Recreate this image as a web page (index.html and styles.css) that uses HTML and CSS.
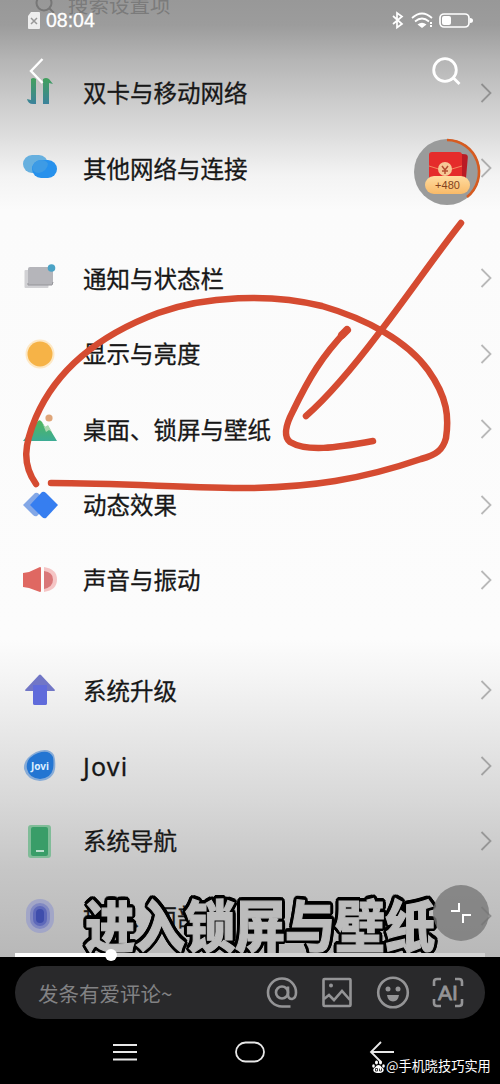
FILE: index.html
```
<!DOCTYPE html>
<html lang="zh-CN">
<head>
<meta charset="utf-8">
<title>设置</title>
<link rel="stylesheet" href="styles.css">
</head>
<body>
<div class="phone">
  <main class="video">
    <div class="search-row">
      <svg class="search-small" width="22" height="22" viewBox="0 0 22 22"><circle cx="10" cy="9" r="7.5"/><path d="M15 14l5 5"/></svg>
      <span>搜索设置项</span>
    </div>
    <section class="group">
      <div class="row">
        <svg class="icon" viewBox="0 0 34 34"><defs><linearGradient id="sim" x2="0" y2="1"><stop stop-color="#42a05d"/><stop offset="1" stop-color="#3b829b"/></linearGradient></defs><path fill="url(#sim)" d="M8 3q2-2 5 0v25H10Q5 28 4 23l4 1zM20 3q3-2 6 0l4 5-4-1v21h-6z"/></svg>
        <span class="label">双卡与移动网络</span><svg class="chevron" viewBox="0 0 12 20"><path d="M1.500 1l9 9-9 9"/></svg>
      </div>
      <div class="row">
        <svg class="icon" viewBox="0 0 34 34"><rect x="0" y="4" width="25" height="18" rx="9" fill="#67b0df"/><rect x="9" y="9" width="25" height="18" rx="9" fill="#2791ec"/><path d="M9.500 18q0-8 8-9 6 0 7.500 4-1 7-9 9-5 0-6.500-4z" fill="#3d9be5"/></svg>
        <span class="label">其他网络与连接</span><svg class="chevron" viewBox="0 0 12 20"><path d="M1.500 1l9 9-9 9"/></svg>
      </div>
    </section>
    <section class="group">
      <div class="row">
        <svg class="icon" viewBox="0 0 34 34"><rect x="1.500" y="9" width="24" height="18" rx="1" fill="#d1d1d4"/><rect x="5" y="6" width="25" height="18" rx="2" fill="#b5b5ba"/><path d="M5 22v2h24l1-3" stroke="#949499" fill="none"/><circle cx="28.500" cy="7" r="3.800" fill="#4ba3c6"/></svg>
        <span class="label">通知与状态栏</span><svg class="chevron" viewBox="0 0 12 20"><path d="M1.500 1l9 9-9 9"/></svg>
      </div>
      <div class="row">
        <svg class="icon" viewBox="0 0 34 34"><circle cx="17" cy="17" r="14.500" fill="#fde8c5"/><circle cx="17" cy="17" r="12.500" fill="#f6b347"/></svg>
        <span class="label">显示与亮度</span><svg class="chevron" viewBox="0 0 12 20"><path d="M1.500 1l9 9-9 9"/></svg>
      </div>
      <div class="row">
        <svg class="icon" viewBox="0 0 34 34"><defs><linearGradient id="hill" x2="0" y2="1"><stop stop-color="#50b75d"/><stop offset="1" stop-color="#3cab95"/></linearGradient></defs><path d="M0 29L15 9q2-2 4 1l3 5 3-1 9 15z" fill="url(#hill)"/><path d="M19 10l3 5 3-2 4 7-3-2-3 2z" fill="#a9d8ad"/><circle cx="26" cy="6" r="3.600" fill="#dfa579"/></svg>
        <span class="label">桌面、锁屏与壁纸</span><svg class="chevron" viewBox="0 0 12 20"><path d="M1.500 1l9 9-9 9"/></svg>
      </div>
      <div class="row">
        <svg class="icon" viewBox="0 0 34 34"><path d="M12 5q2-1 4 1l9 11-11 11q-2 1-4-1L0 17z" fill="#83a7e6"/><path d="M19 4q2-1 4 1l12 12-12 13q-2 1-4-1L7 17z" fill="#367ef0"/></svg>
        <span class="label">动态效果</span><svg class="chevron" viewBox="0 0 12 20"><path d="M1.500 1l9 9-9 9"/></svg>
      </div>
      <div class="row">
        <svg class="icon" viewBox="0 0 34 34"><path d="M0 10l6-1 11-5q1 0 1 1v23q0 1-1 1L6 25l-6-1z" fill="#df6862"/><path d="M21 4q13 2 13 12.500T21 29z" fill="#f5c5c5"/><path d="M21 8q9 1 9 8.500T21 26z" fill="#d97779"/></svg>
        <span class="label">声音与振动</span><svg class="chevron" viewBox="0 0 12 20"><path d="M1.500 1l9 9-9 9"/></svg>
      </div>
    </section>
    <section class="group">
      <div class="row">
        <svg class="icon" viewBox="0 0 34 34"><path d="M16 2q1-1 2 0l14 15q0 1-1 1h-7v12q0 2-2 2H12q-2 0-2-2V18H3q-1 0-1-1z" fill="#7176c6"/><path d="M10 12h14v18q0 2-2 2H12q-2 0-2-2z" fill="#606bdb"/></svg>
        <span class="label">系统升级</span><svg class="chevron" viewBox="0 0 12 20"><path d="M1.500 1l9 9-9 9"/></svg>
      </div>
      <div class="row">
        <svg class="icon" viewBox="0 0 34 34"><path d="M13 3Q26-2 31 6q2 6 1 14-2 11-15 12Q4 31 1 20 0 10 13 3z" fill="#86abd7"/><path d="M15 4q11-4 15 4 1 6 0 12-2 9-13 10Q6 29 4 20 2 9 15 4z" fill="#2375d2"/><text x="17" y="21" class="jovi-mark">Jovi</text></svg>
        <span class="label latin">Jovi</span><svg class="chevron" viewBox="0 0 12 20"><path d="M1.500 1l9 9-9 9"/></svg>
      </div>
      <div class="row">
        <svg class="icon" viewBox="0 0 34 34"><rect x="5" y="1" width="23" height="33" rx="3" fill="#80bc98"/><rect x="8" y="3" width="17" height="29" rx="2" fill="#399d68"/><path d="M13 27h8" stroke="#bbdfcd" stroke-width="2"/></svg>
        <span class="label">系统导航</span><svg class="chevron" viewBox="0 0 12 20"><path d="M1.500 1l9 9-9 9"/></svg>
      </div>
      <div class="row">
        <svg class="icon" viewBox="0 0 34 34"><rect x="3" y="0" width="28" height="34" rx="14" fill="#a2a6c7"/><rect x="7" y="4" width="20" height="26" rx="10" fill="#8088c2"/><rect x="10" y="7" width="14" height="20" rx="7" fill="#5e69ba"/><rect x="13" y="10" width="8" height="14" rx="4" fill="#3e4dac"/></svg>
        <span class="label">指纹、面部</span><svg class="chevron" viewBox="0 0 12 20"><path d="M1.500 1l9 9-9 9"/></svg>
      </div>
    </section>

    <svg class="drawing" width="500" height="957" viewBox="0 0 500 957">
      <path d="M36 484C22 464 24 445 36 417C60 362 110 331 158 313C205 296 270 293 322 306C367 319 407 341 428 370C448 398 449 418 446 438C443 450 436 455 421 459C360 480 310 487 250 488C190 488 120 483 51 483"/>
      <path d="M461 223C432 260 405 300 379 333C354 366 330 395 306 416"/>
      <path d="M347 330C322 356 309 378 293 411C284 428 284 437 290 442C307 452 335 448 373 441"/>
      <path class="blob" d="M347 330l-5 5"/>
    </svg>

    <header class="status">
      <svg class="sim-status" width="14" height="18" viewBox="0 0 14 18"><path d="M4 1h8q1 0 1 1v15q0 1-1 1H2q-1 0-1-1V5z" fill="#eee"/><path d="M4 7l6 6m0-6l-6 6" stroke="#999" stroke-width="1.500"/></svg>
      <span class="time">08:04</span>
      <svg class="signals" width="86" height="20" viewBox="0 0 86 20"><g fill="none" stroke="#fff" stroke-width="1.700"><path d="M3 6l9 8-5 3.500V3l5 3.500-9 7.500"/><path d="M22 8q10-9 20 0M25 11.500q7-6 14 0"/><rect x="50" y="4" width="29" height="13" rx="4"/></g><path d="M27.500 14.500q4.500-3.500 9 0L32 18z" fill="#fff"/><path d="M40 12h2v2h-2zm0 3h2v2h-2z" fill="#fff"/><rect x="52" y="6" width="9" height="9" rx="2" fill="#fff"/><path d="M80 8q3 0 3 2.500T80 13z" fill="#fff"/></svg>
    </header>
    <svg class="back" width="16" height="28" viewBox="0 0 16 28"><path d="M14.500 2L3 14l11.500 12"/></svg>
    <svg class="search" width="32" height="32" viewBox="0 0 32 32"><circle cx="14" cy="14" r="11.300"/><path d="M22 21.500l6.500 6.500"/></svg>

    <div class="reward">
      <svg width="68" height="68" viewBox="0 0 68 68"><circle cx="34" cy="34" r="33" fill="#9a9b9b"/><path d="M34 2a32 32 0 0 1 20 57" fill="none" stroke="#d75b20" stroke-width="2.600"/><rect x="22" y="15" width="32" height="26" rx="3" fill="#b91b25" transform="rotate(5 38 28)"/><rect x="16" y="14" width="33" height="27" rx="3" fill="#e52c2b"/><path d="M16 28l16 5 17-5" fill="none" stroke="#f38a62"/><circle cx="32" cy="31" r="7" fill="#f6c896"/><path d="M29 28l3 4 3-4m-3 4v4m-3-3h6" fill="none" stroke="#b54e32" stroke-width="1.500"/></svg>
      <span class="points">+480</span>
    </div>
    <div class="caption">进入锁屏与壁纸</div>
    <div class="shrink"><svg width="22" height="22" viewBox="0 0 22 22"><path d="M1 9h8V1M21 13h-8v8"/></svg></div>
    <div class="progress"><span class="played"></span><span class="knob"></span></div>
  </main>

  <footer class="bottom">
    <div class="comment">
      <span class="placeholder">发条有爱评论~</span>
      <div class="tools">
        <svg viewBox="0 0 32 32"><circle cx="16" cy="15.500" r="6"/><path d="M22 9.500v8q0 4.500 4 4.500 4-1 4-6.500A14 14 0 1 0 16 29.500h8.500"/></svg>
        <svg viewBox="0 0 32 32"><rect x="2.500" y="2" width="27" height="27" rx="1"/><path d="M3 22l5-4 5 5 8-9 8 9"/><circle class="solid" cx="10" cy="8.500" r="2"/></svg>
        <svg viewBox="0 0 32 32"><circle cx="16" cy="15.500" r="14.800"/><circle class="solid" cx="11" cy="12" r="2.500"/><circle class="solid" cx="21" cy="12" r="2.500"/><path class="solid" d="M10 18h12q-1 6.500-6 6.500T10 18z"/></svg>
        <svg viewBox="0 0 32 32"><path d="M9 2H5Q2 2 2 5v4M23 2h4q3 0 3 3v4M9 29H5q-3 0-3-3v-4M23 29h4q3 0 3-3v-4"/><text x="16" y="23" class="ai">AI</text></svg>
      </div>
    </div>
    <nav class="navigation">
      <svg width="26" height="20" viewBox="0 0 26 20"><path d="M1 3h24M1 10h24M1 17.500h24"/></svg>
      <svg class="home" width="30" height="22" viewBox="0 0 30 22"><rect x="1" y="1.500" width="28" height="19" rx="9.500"/></svg>
      <svg width="26" height="22" viewBox="0 0 26 22"><path d="M12 1L2 11l10 10M2 11h23"/></svg>
    </nav>
    <div class="watermark"><svg width="13" height="13" viewBox="0 0 13 13"><ellipse cx="4.500" cy="2.500" rx="1.500" ry="2"/><ellipse cx="8.500" cy="2.500" rx="1.500" ry="2"/><ellipse cx="1.500" cy="6" rx="1.300" ry="1.800"/><ellipse cx="11.500" cy="6" rx="1.300" ry="1.800"/><path d="M6.500 5q2 0 3 2 3 2 2 4-1 2-5 2t-5-2q-1-2 2-4 1-2 3-2z"/><path d="M5.500 8.500h-2v2.500h2zM7.500 8.500V11h2V8.500" fill="none" stroke="#111" stroke-width=".8"/></svg><span>@手机晓技巧实用</span></div>
  </footer>
</div>
</body>
</html>
```
FILE: styles.css
```
* { box-sizing: border-box; }
body {
  margin: 0;
  background: #000;
  font-family: "Noto Sans", "Noto Sans CJK SC", sans-serif;
}
svg { display: block; flex: none; overflow: visible; }
.phone { width: 500px; height: 1084px; overflow: hidden; }
.video {
  position: relative;
  z-index: 1;
  height: 957px;
  background: linear-gradient(#989898 0, #9c9c9c 25px, #b5b5b5 60px, #cbcbcb 100px, #dedede 137px, #f3f3f3 175px, #fbfbfb 210px, #fcfcfc 640px, #f5f5f5 675px, #e8e8e8 730px, #d8d8d8 800px, #c6c6c6 870px, #b8b8b8 957px);
}
.search-row {
  height: 55px;
  padding: 0 0 0 34px;
  display: flex;
  align-items: flex-start;
  color: #7b7b7b;
  font-size: 20.500px;
  line-height: 24px;
}
.search-row span { margin: -7px 0 0 12px; }
.search-small { margin-top: -6px; fill: none; stroke: #777; stroke-width: 2; }
.group { margin-bottom: 34.900px; }
.row { height: 75.400px; padding: 0 8px 0 23px; display: flex; align-items: center; }
.icon { width: 34px; height: 34px; }
.label { margin-left: 26px; padding-bottom: 1px; flex: 1; font-family: "Noto Sans CJK SC", sans-serif; font-size: 23.500px; line-height: 34px; color: #171717; -webkit-text-stroke: .3px #171717; white-space: nowrap; }
.label.latin { padding: 1px 0 0; font-family: "Noto Sans", sans-serif; font-size: 25px; letter-spacing: 1.200px; }
.chevron { width: 12px; height: 20px; fill: none; stroke: #000; stroke-opacity: .27; stroke-width: 1.800; }
.jovi-mark { font: bold 10px "Noto Sans", sans-serif; fill: #dceeff; text-anchor: middle; }

.drawing { position: absolute; left: 0; top: 0; fill: none; stroke: #d54b31; stroke-width: 6.500; stroke-linecap: round; stroke-linejoin: round; }
.drawing .blob { stroke-width: 8; }

.status { position: absolute; left: 27px; right: 24px; top: 9px; height: 22px; display: flex; align-items: center; color: #fff; }
.time { margin-left: 5px; flex: 1; font: 19.500px/22px "Liberation Sans", sans-serif; -webkit-text-stroke: .3px #fff; }
.back { position: absolute; left: 28px; top: 57px; fill: none; stroke: #fff; stroke-width: 2.400; }
.search { position: absolute; left: 431px; top: 56px; fill: none; stroke: #fff; stroke-width: 2.800; }
.reward { position: absolute; left: 413px; top: 138px; width: 68px; height: 68px; }
.points { position: absolute; left: 12px; top: 38px; width: 45px; height: 18px; border-radius: 9px; background: linear-gradient(#ffdca0, #f9ba68); color: #83421d; font: 11px/18px "Liberation Sans", sans-serif; text-align: center; }
.caption {
  position: absolute;
  left: 85px;
  top: 893px;
  color: #bcbcbc;
  font: 900 50px/58px "Noto Sans CJK SC", sans-serif;
  white-space: nowrap;
  transform: scaleY(1.120);
  -webkit-text-stroke: 1px #bcbcbc;
  text-shadow: 3.500px 0 #000, -3.500px 0 #000, 0 3.300px #000, 0 -3.300px #000,
    2.500px 2.500px #000, -2.500px 2.500px #000, 2.500px -2.500px #000, -2.500px -2.500px #000,
    3.200px 1.400px #000, -3.200px 1.400px #000, 3.200px -1.400px #000, -3.200px -1.400px #000,
    1.400px 3px #000, -1.400px 3px #000, 1.400px -3px #000, -1.400px -3px #000,
    1.500px 0 #000, -1.500px 0 #000, 0 1.500px #000, 0 -1.500px #000;
}
.shrink { position: absolute; left: 433px; top: 885px; width: 56px; height: 56px; border-radius: 50%; background: rgba(118,118,118,.78); display: grid; place-items: center; }
.shrink svg { fill: none; stroke: #fff; stroke-width: 2; }
.progress { position: absolute; left: 15px; right: 15px; bottom: 0; height: 4px; background: #d3d3d3; }
.played { display: block; width: 96px; height: 4px; background: #fff; }
.knob { position: absolute; left: 90px; bottom: -4px; width: 12px; height: 12px; border-radius: 50%; background: #fff; }

.bottom { position: relative; height: 127px; padding: 9px 15px 0; background: #000; }
.comment { height: 53px; border-radius: 27px; padding: 0 21px 0 23px; background: #29292b; display: flex; align-items: center; justify-content: space-between; }
.placeholder { color: #828284; font: 20.500px/28px "Noto Sans CJK SC", sans-serif; }
.tools { display: flex; gap: 23.500px; }
.tools svg { width: 32px; height: 32px; fill: none; stroke: #949496; stroke-width: 2.600; }
.tools .solid { fill: #949496; stroke: none; }
.tools .ai { font: 21px "Liberation Sans", sans-serif; fill: #949496; stroke: #949496; stroke-width: .8; text-anchor: middle; }
.navigation { margin-top: 20px; padding: 0 90px 0 97px; height: 26px; display: flex; align-items: center; justify-content: space-between; }
.navigation svg { fill: none; stroke: #e8e8e8; stroke-width: 1.800; }
.navigation .home { margin-right: 7px; }
.watermark { position: absolute; left: 372px; top: 99px; display: flex; align-items: center; gap: 1px; color: #fff; font: 13.200px/20px "Noto Sans CJK SC", sans-serif; white-space: nowrap; }
.watermark svg { fill: #fff; }
```
